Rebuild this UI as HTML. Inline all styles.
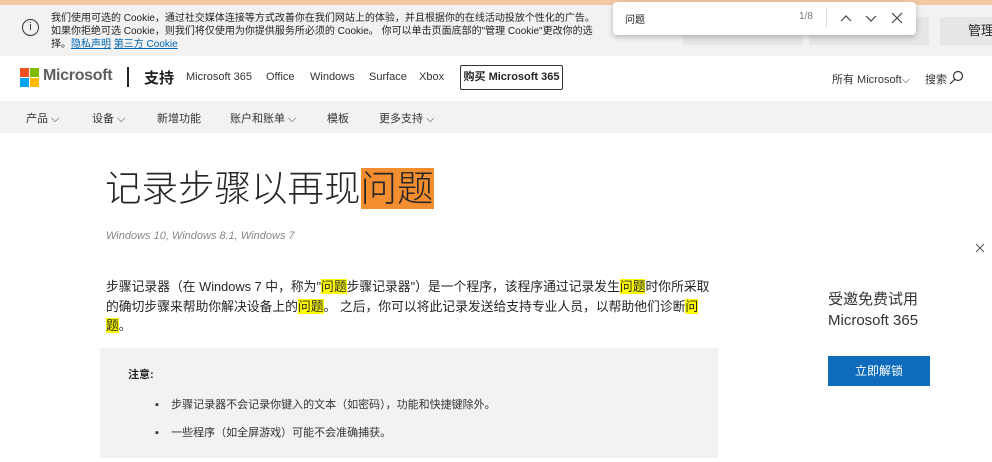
<!DOCTYPE html>
<html><head><meta charset="utf-8"><style>
*{margin:0;padding:0;box-sizing:border-box}
body{width:992px;height:462px;overflow:hidden;position:relative;background:#fff;font-family:"Liberation Sans","Noto Sans CJK SC",sans-serif;color:#262626}
.a{position:absolute;white-space:nowrap}
.hl{background:#ffff00}
</style></head><body>
<div class="a" style="left:0;top:0;width:992px;height:5px;background:#f3c9a4"></div>
<div class="a" style="left:0;top:5px;width:992px;height:51px;background:#f2f2f2"></div>
<div class="a" style="left:22px;top:19px;width:17px;height:17px;border:1.3px solid #333;border-radius:50%;font-size:11px;line-height:14px;text-align:center;color:#333">i</div>
<div class="a" style="left:51px;top:12px;font-size:10px;line-height:13px;color:#222">我们使用可选的 Cookie，通过社交媒体连接等方式改善你在我们网站上的体验，并且根据你的在线活动投放个性化的广告。<br>如果你拒绝可选 Cookie，则我们将仅使用为你提供服务所必须的 Cookie。 你可以单击页面底部的"管理 Cookie"更改你的选<br>择。<span style="color:#0067b8;text-decoration:underline">隐私声明</span> <span style="color:#0067b8;text-decoration:underline">第三方 Cookie</span></div>
<div class="a" style="left:683px;top:17px;width:120px;height:28px;background:#e6e6e6"></div>
<div class="a" style="left:809px;top:17px;width:120px;height:28px;background:#e6e6e6"></div>
<div class="a" style="left:940px;top:17px;width:60px;height:28px;background:#e6e6e6;font-size:13px;line-height:28px;padding-left:28px">管理</div>
<div class="a" style="left:613px;top:2px;width:303px;height:33px;background:#fff;border-radius:4px;box-shadow:0 2px 6px rgba(0,0,0,.25)"></div>
<div class="a" style="left:625px;top:11px;font-size:10px;color:#222">问题</div>
<div class="a" style="left:799px;top:11px;font-size:10px;color:#777">1/8</div>
<div class="a" style="left:826px;top:8px;width:1px;height:20px;background:#e0e0e0"></div>
<svg class="a" style="left:838px;top:11px" width="70" height="14" fill="none" stroke="#444" stroke-width="1.2"><path d="M3 10l5-5 5 5"/><path d="M28 5l5 5 5-5"/><path d="M54 2l10 10M64 2l-10 10"/></svg>

<svg class="a" style="left:20px;top:68px" width="19" height="19"><rect width="9" height="9" fill="#f25022"/><rect x="10" width="9" height="9" fill="#7fba00"/><rect y="10" width="9" height="9" fill="#00a4ef"/><rect x="10" y="10" width="9" height="9" fill="#ffb900"/></svg>
<div class="a" style="left:43px;top:67px;font-size:16px;font-weight:bold;color:#5e5e5e;letter-spacing:-.3px">Microsoft</div>
<div class="a" style="left:127px;top:67px;width:1.5px;height:20px;background:#222"></div>
<div class="a" style="left:144px;top:67px;font-size:15px;font-weight:bold;color:#222">支持</div>
<div class="a" style="left:186px;top:71px;font-size:11px;color:#333">Microsoft 365</div>
<div class="a" style="left:266px;top:71px;font-size:11px;color:#333">Office</div>
<div class="a" style="left:310px;top:71px;font-size:11px;color:#333">Windows</div>
<div class="a" style="left:369px;top:71px;font-size:11px;color:#333">Surface</div>
<div class="a" style="left:419px;top:71px;font-size:11px;color:#333">Xbox</div>
<div class="a" style="left:460px;top:65px;width:103px;height:25px;border:1px solid #333;border-radius:2px;font-size:11px;line-height:23px;text-align:center;font-weight:bold">购买 Microsoft 365</div>
<div class="a" style="left:832px;top:71px;font-size:11px;color:#333">所有 Microsoft⌵</div>
<div class="a" style="left:925px;top:71px;font-size:11px;color:#333">搜索</div>
<svg class="a" style="left:948px;top:70px" width="16" height="16" fill="none" stroke="#333" stroke-width="1.2"><circle cx="10" cy="6" r="4.5"/><path d="M6.8 9.2L2 14"/></svg>

<div class="a" style="left:0;top:101px;width:992px;height:32px;background:#f2f2f2"></div>
<div class="a" style="left:26px;top:110px;font-size:11px;color:#333">产品 ⌵</div>
<div class="a" style="left:92px;top:110px;font-size:11px;color:#333">设备 ⌵</div>
<div class="a" style="left:157px;top:110px;font-size:11px;color:#333">新增功能</div>
<div class="a" style="left:230px;top:110px;font-size:11px;color:#333">账户和账单 ⌵</div>
<div class="a" style="left:327px;top:110px;font-size:11px;color:#333">模板</div>
<div class="a" style="left:379px;top:110px;font-size:11px;color:#333">更多支持 ⌵</div>

<div class="a" style="left:105px;top:166px;font-size:36.5px;line-height:46px;font-weight:300;color:#262626">记录步骤以再现<span style="background:#f28e30">问题</span></div>
<div class="a" style="left:106px;top:230px;font-size:11px;font-style:italic;color:#888">Windows 10, Windows 8.1, Windows 7</div>
<div class="a" style="left:106px;top:277px;width:610px;white-space:normal;font-size:12.8px;line-height:19.5px;color:#262626">步骤记录器（在 Windows 7 中，称为"<span class="hl">问题</span>步骤记录器"）是一个程序，该程序通过记录发生<span class="hl">问题</span>时你所采取的确切步骤来帮助你解决设备上的<span class="hl">问题</span>。 之后，你可以将此记录发送给支持专业人员，以帮助他们诊断<span class="hl">问题</span>。</div>
<div class="a" style="left:100px;top:348px;width:618px;height:110px;background:#f2f2f2"></div>
<div class="a" style="left:128px;top:366px;font-size:11px;font-weight:bold;color:#222">注意:</div>
<div class="a" style="left:155px;top:396px;font-size:11px;color:#333">▪&nbsp;&nbsp;&nbsp;&nbsp;步骤记录器不会记录你键入的文本（如密码），功能和快捷键除外。</div>
<div class="a" style="left:155px;top:424px;font-size:11px;color:#333">▪&nbsp;&nbsp;&nbsp;&nbsp;一些程序（如全屏游戏）可能不会准确捕获。</div>

<svg class="a" style="left:975px;top:243px" width="10" height="10" stroke="#555" stroke-width="1"><path d="M1 1l8 8M9 1l-8 8"/></svg>
<div class="a" style="left:828px;top:289px;font-size:15px;line-height:21px;color:#333">受邀免费试用<br>Microsoft 365</div>
<div class="a" style="left:828px;top:356px;width:102px;height:30px;background:#0f6cbd;color:#fff;font-size:12px;line-height:30px;text-align:center">立即解锁</div>
</body></html>
